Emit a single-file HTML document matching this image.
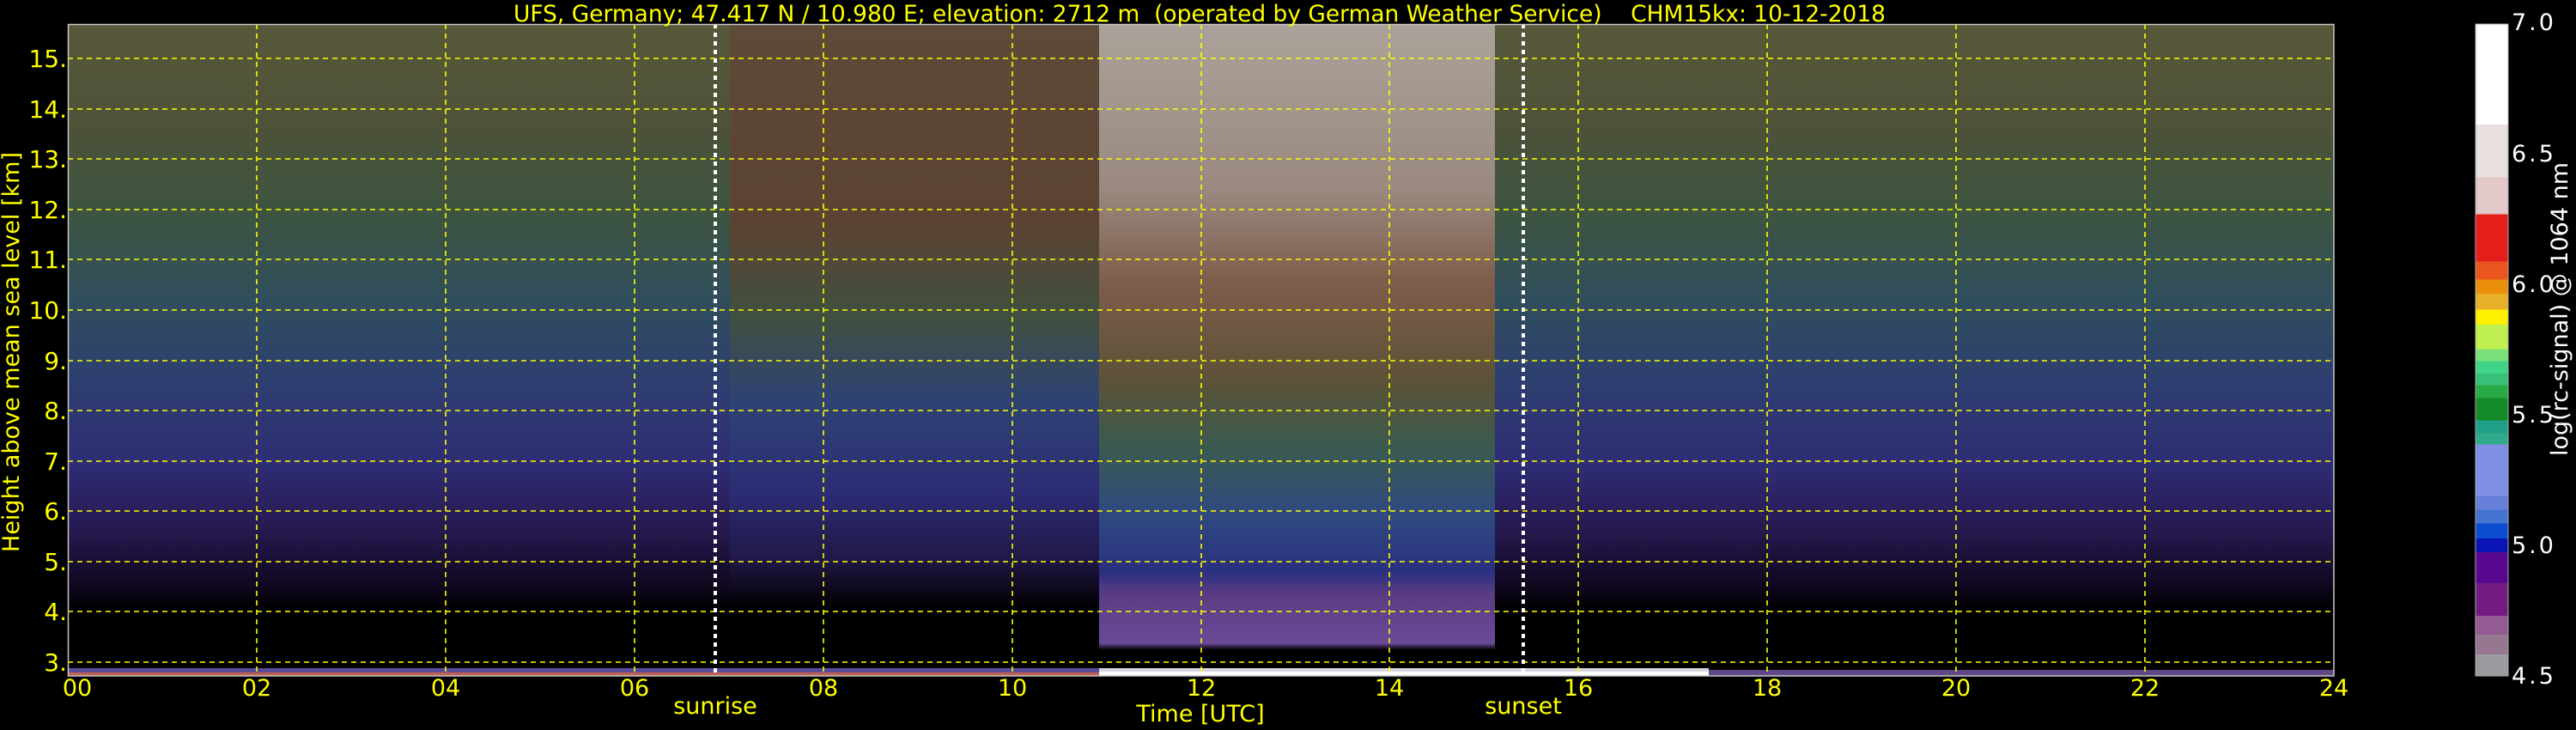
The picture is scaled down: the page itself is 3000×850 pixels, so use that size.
<!DOCTYPE html>
<html><head><meta charset="utf-8"><style>
html,body{margin:0;padding:0;background:#000;width:3000px;height:850px;overflow:hidden}
svg{display:block}
text{font-family:"DejaVu Sans","Liberation Sans",sans-serif}
</style></head><body>
<svg width="3000" height="850" viewBox="0 0 3000 850" xmlns="http://www.w3.org/2000/svg">
<defs>
<linearGradient id="gL" x1="0" y1="28" x2="0" y2="787" gradientUnits="userSpaceOnUse">
<stop offset="0" stop-color="#58583a"/><stop offset="0.15" stop-color="#4e5238"/>
<stop offset="0.3" stop-color="#3c5442"/><stop offset="0.42" stop-color="#304e5c"/>
<stop offset="0.55" stop-color="#2e3e70"/><stop offset="0.68" stop-color="#2e2c74"/>
<stop offset="0.78" stop-color="#26184e"/><stop offset="0.86" stop-color="#100820"/>
<stop offset="0.9" stop-color="#000"/><stop offset="1" stop-color="#000"/>
</linearGradient>
<linearGradient id="gM" x1="0" y1="28" x2="0" y2="787" gradientUnits="userSpaceOnUse">
<stop offset="0" stop-color="#5e4a38"/><stop offset="0.3" stop-color="#5c4232"/>
<stop offset="0.45" stop-color="#405040"/><stop offset="0.58" stop-color="#2e4274"/>
<stop offset="0.72" stop-color="#2c2c74"/><stop offset="0.82" stop-color="#201848"/>
<stop offset="0.88" stop-color="#080410"/><stop offset="0.9" stop-color="#000"/><stop offset="1" stop-color="#000"/>
</linearGradient>
<linearGradient id="gB" x1="0" y1="28" x2="0" y2="787" gradientUnits="userSpaceOnUse">
<stop offset="0" stop-color="#aaa29a"/><stop offset="0.25" stop-color="#9a8a80"/>
<stop offset="0.4" stop-color="#7c5c4a"/><stop offset="0.55" stop-color="#5c5238"/>
<stop offset="0.65" stop-color="#3a5a50"/><stop offset="0.75" stop-color="#304a80"/>
<stop offset="0.84" stop-color="#2a3080"/><stop offset="0.875" stop-color="#5a3c84"/>
<stop offset="0.95" stop-color="#6a4a96"/><stop offset="0.96" stop-color="#000"/><stop offset="1" stop-color="#000"/>
</linearGradient>
<linearGradient id="fadeL" x1="850" x2="900" y1="0" y2="0" gradientUnits="userSpaceOnUse">
<stop offset="0" stop-color="#000" stop-opacity="1"/><stop offset="1" stop-color="#000" stop-opacity="0"/>
</linearGradient>
<linearGradient id="cb" x1="0" y1="28" x2="0" y2="787" gradientUnits="userSpaceOnUse">
<stop offset="0" stop-color="#ffffff"/><stop offset="0.154" stop-color="#ffffff"/>
<stop offset="0.154" stop-color="#e8e0de"/><stop offset="0.235" stop-color="#e8e0de"/>
<stop offset="0.235" stop-color="#e2c8c8"/><stop offset="0.292" stop-color="#e2c8c8"/>
<stop offset="0.292" stop-color="#e41e1a"/><stop offset="0.364" stop-color="#e41e1a"/>
<stop offset="0.364" stop-color="#ea5520"/><stop offset="0.392" stop-color="#ea5520"/>
<stop offset="0.392" stop-color="#ea900c"/><stop offset="0.414" stop-color="#ea900c"/>
<stop offset="0.414" stop-color="#e8b028"/><stop offset="0.438" stop-color="#e8b028"/>
<stop offset="0.438" stop-color="#fff000"/><stop offset="0.461" stop-color="#fff000"/>
<stop offset="0.461" stop-color="#c0f050"/><stop offset="0.499" stop-color="#c0f050"/>
<stop offset="0.499" stop-color="#7ae07a"/><stop offset="0.517" stop-color="#7ae07a"/>
<stop offset="0.517" stop-color="#40d488"/><stop offset="0.536" stop-color="#40d488"/>
<stop offset="0.536" stop-color="#38c07a"/><stop offset="0.554" stop-color="#38c07a"/>
<stop offset="0.554" stop-color="#2aaa44"/><stop offset="0.574" stop-color="#2aaa44"/>
<stop offset="0.574" stop-color="#148a28"/><stop offset="0.608" stop-color="#148a28"/>
<stop offset="0.608" stop-color="#20a088"/><stop offset="0.628" stop-color="#20a088"/>
<stop offset="0.628" stop-color="#30aa8a"/><stop offset="0.645" stop-color="#30aa8a"/>
<stop offset="0.645" stop-color="#8090e6"/><stop offset="0.724" stop-color="#8090e6"/>
<stop offset="0.724" stop-color="#6680da"/><stop offset="0.745" stop-color="#6680da"/>
<stop offset="0.745" stop-color="#4474d0"/><stop offset="0.766" stop-color="#4474d0"/>
<stop offset="0.766" stop-color="#0c4cd0"/><stop offset="0.789" stop-color="#0c4cd0"/>
<stop offset="0.789" stop-color="#0a14b4"/><stop offset="0.81" stop-color="#0a14b4"/>
<stop offset="0.81" stop-color="#58088e"/><stop offset="0.858" stop-color="#58088e"/>
<stop offset="0.858" stop-color="#721c82"/><stop offset="0.908" stop-color="#721c82"/>
<stop offset="0.908" stop-color="#945a92"/><stop offset="0.937" stop-color="#945a92"/>
<stop offset="0.937" stop-color="#967690"/><stop offset="0.967" stop-color="#967690"/>
<stop offset="0.967" stop-color="#9c9ca0"/><stop offset="1" stop-color="#9c9ca0"/>
</linearGradient>
</defs>

<!-- plot background regions -->
<rect x="79" y="28" width="2639" height="759" fill="url(#gL)"/>
<rect x="850" y="28" width="430" height="759" fill="url(#gM)"/>
<rect x="1280" y="28" width="461" height="759" fill="url(#gB)"/>
<!-- bottom strip -->
<rect x="79" y="778" width="1201" height="9" fill="#5a4a9a"/>
<rect x="79" y="783" width="1201" height="4" fill="#c06050"/>
<rect x="1280" y="778" width="710" height="9" fill="#d8d4e0"/>
<rect x="1280" y="782" width="710" height="5" fill="#ffffff"/>
<rect x="1990" y="780" width="728" height="7" fill="#604888"/>

<!-- grid -->
<g stroke="#ffff00" stroke-width="1.6" stroke-dasharray="6,5" fill="none">
<path d="M79 771H2718M79 712H2718M79 654H2718M79 595H2718M79 537H2718M79 478H2718M79 420H2718M79 361H2718M79 302H2718M79 244H2718M79 185H2718M79 127H2718M79 68H2718"/>
<path d="M299 28V787M519 28V787M739 28V787M959 28V787M1179 28V787M1399 28V787M1618 28V787M1838 28V787M2058 28V787M2278 28V787M2498 28V787"/>
</g>
<!-- sunrise/sunset -->
<g stroke="#ffffff" stroke-width="4" stroke-dasharray="5,5">
<path d="M833 28V787M1774 28V787"/>
</g>
<rect x="79.5" y="28.5" width="2638.5" height="758.5" fill="none" stroke="#c8c8c8" stroke-width="1.5"/>

<!-- title -->
<text x="598" y="25" font-size="27" fill="#ffff00" textLength="1598" lengthAdjust="spacingAndGlyphs" xml:space="preserve">UFS, Germany; 47.417 N / 10.980 E; elevation: 2712 m  (operated by German Weather Service)    CHM15kx: 10-12-2018</text>

<!-- y ticks -->
<g font-size="28" fill="#ffff00" text-anchor="end">
<text x="78" y="781">3.</text><text x="78" y="722">4.</text><text x="78" y="664">5.</text>
<text x="78" y="605">6.</text><text x="78" y="547">7.</text><text x="78" y="488">8.</text>
<text x="78" y="430">9.</text><text x="78" y="371">10.</text><text x="78" y="312">11.</text>
<text x="78" y="254">12.</text><text x="78" y="195">13.</text><text x="78" y="137">14.</text>
<text x="78" y="78">15.</text>
</g>
<text transform="translate(22,410) rotate(-90)" font-size="27" fill="#ffff00" text-anchor="middle">Height above mean sea level [km]</text>

<!-- x ticks -->
<g font-size="27" fill="#ffff00" text-anchor="middle">
<text x="90" y="810">00</text><text x="299" y="810">02</text><text x="519" y="810">04</text>
<text x="739" y="810">06</text><text x="959" y="810">08</text><text x="1179" y="810">10</text>
<text x="1399" y="810">12</text><text x="1618" y="810">14</text><text x="1838" y="810">16</text>
<text x="2058" y="810">18</text><text x="2278" y="810">20</text><text x="2498" y="810">22</text>
<text x="2718" y="810">24</text>
<text x="833" y="831">sunrise</text><text x="1774" y="831">sunset</text>
<text x="1398" y="840">Time [UTC]</text>
</g>

<!-- colorbar -->
<rect x="2883" y="28" width="38" height="759" fill="url(#cb)"/>
<rect x="2883" y="28" width="38" height="759" fill="none" stroke="#aaa" stroke-width="1"/>
<g font-size="27" fill="#ffffff" letter-spacing="3">
<text x="2925" y="35">7.0</text><text x="2925" y="188">6.5</text><text x="2925" y="340">6.0</text>
<text x="2925" y="492">5.5</text><text x="2925" y="644">5.0</text><text x="2925" y="796">4.5</text>
</g>
<text transform="translate(2990,360) rotate(-90)" font-size="27" fill="#ffffff" text-anchor="middle">log(rc-signal) @ 1064 nm</text>
</svg>
</body></html>
